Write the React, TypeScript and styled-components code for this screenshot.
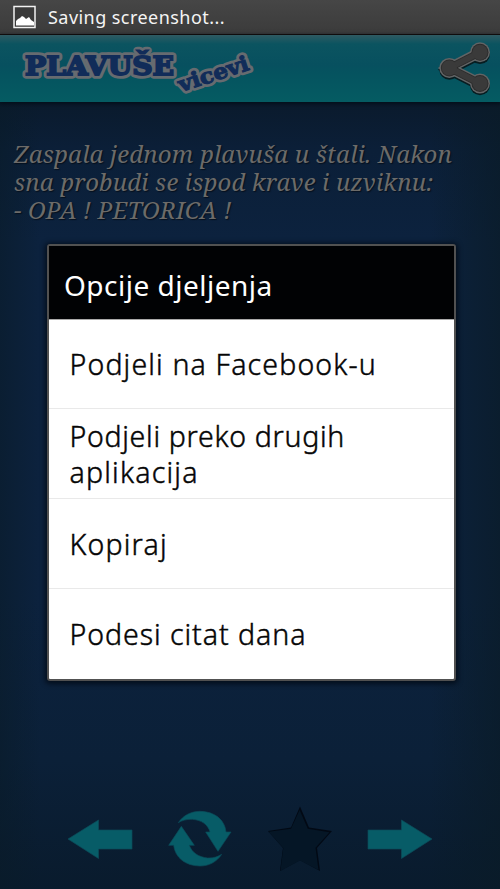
import React from "react";
import styled, { createGlobalStyle } from "styled-components";

const Global = createGlobalStyle`
  * { box-sizing: border-box; }
  body { margin: 0; background: #0a1c33; }
`;

const Screen = styled.div`
  position: relative;
  width: 500px;
  height: 889px;
  overflow: hidden;
  display: flex;
  flex-direction: column;
  background:
    linear-gradient(90deg, rgba(9, 27, 40, 0.55), transparent 8%, transparent 86%, rgba(10, 27, 39, 0.7)),
    linear-gradient(#0a1a2c 100px, #0b1f38 150px, #0c223e 240px, #0c223e 600px, #0b2038 760px, #091b2d 889px);
`;

const StatusBar = styled.div`
  flex: none;
  height: 35px;
  display: flex;
  align-items: center;
  gap: 12px;
  padding: 0 13px 1px;
  background: linear-gradient(#464646, #3b3b3b);
  border-bottom: 1px solid #170e0a;
  color: #f4f4f4;
`;

const StatusText = styled.span`
  font: 18px/24px "Noto Sans", sans-serif;
  white-space: nowrap;
  letter-spacing: 0.45px;
`;

const Header = styled.header`
  flex: none;
  height: 67px;
  display: flex;
  justify-content: space-between;
  background: linear-gradient(#2f5a62, #0b5460 9px, #07505f 30px, #05535f 38px, #055b62 66px);
  box-shadow: 0 1px 4px 1px rgba(2, 8, 18, 0.7);
`;

const Joke = styled.p`
  flex: none;
  margin: 38px 0 0 14px;
  color: #6c6b69;
  font: italic 24px/28px "Noto Serif", "Droid Serif", "DejaVu Serif Condensed", "DejaVu Serif", serif;
  text-shadow: 1px 1px 1px #06101d;
`;

const Line = styled.span<{ $spacing: number }>`
  display: block;
  white-space: nowrap;
  letter-spacing: ${(p) => p.$spacing}px;
`;

const Nav = styled.nav`
  margin-top: auto;
  height: 100px;
  display: flex;
  align-items: center;
  justify-content: space-between;
  padding: 0 50px;
`;

const Dialog = styled.section`
  position: absolute;
  left: 47px;
  top: 244px;
  width: 409px;
  height: 437px;
  border: 2px solid #515151;
  border-radius: 3px;
  background: #fff;
  box-shadow: 0 1px 5px 2px rgba(2, 8, 18, 0.75);
  font-family: "Noto Sans", sans-serif;
`;

const Title = styled.h1`
  margin: 0;
  height: 74px;
  padding: 5px 0 0 15px;
  display: flex;
  align-items: center;
  background: #010204;
  border-bottom: 1px solid #aaa;
  color: #fff;
  font-size: 28px;
  font-weight: 400;
`;

const Options = styled.div`
  margin-top: -1px;
`;

const Option = styled.button`
  width: 100%;
  height: 90px;
  padding: 0 0 0 20.5px;
  display: flex;
  flex-direction: column;
  justify-content: center;
  align-items: flex-start;
  border: 0;
  border-bottom: 1px solid #e9e9e9;
  background: none;
  color: #050505;
  font: 300 28.5px/36px "Noto Sans", sans-serif;
  -webkit-text-stroke: 0.45px #050505;
  &:last-child { border-bottom: 0; }
`;

const Label = styled.span<{ $spacing: number }>`
  display: block;
  white-space: nowrap;
  letter-spacing: ${(p) => p.$spacing}px;
`;

const ImageIcon = () => (
  <svg width="23" height="24" viewBox="0 0 23 24">
    <rect x="1" y="1.5" width="21" height="21" fill="#3a3a3a" stroke="#f2f2f2" strokeWidth="1.5" />
    <path d="M3 20.5V16l2-2 2-1 2-2 2 1 2 2 3-2 2 3 3 2v3.5z" fill="#fff" />
  </svg>
);

const Logo = () => (
  <svg width="270" height="66" viewBox="0 35 270 66">
    <g fontFamily="DejaVu Serif" fontWeight="700" fill="#666b70" stroke="#666b70" strokeLinejoin="round">
      <text x="25" y="75" fontSize="26" strokeWidth="7.5" textLength="149" lengthAdjust="spacingAndGlyphs">PLAVUŠE</text>
      <text fontSize="21" strokeWidth="6.5" transform="translate(181 92) rotate(-18)" textLength="73" lengthAdjust="spacingAndGlyphs">vicevi</text>
    </g>
    <g fontFamily="DejaVu Serif" fontWeight="700" fill="#112c59" stroke="#112c59" strokeWidth="1.9">
      <text x="25" y="75" fontSize="26" textLength="149" lengthAdjust="spacingAndGlyphs">PLAVUŠE</text>
      <text fontSize="21" strokeWidth="1.1" transform="translate(181 92) rotate(-18)" textLength="73" lengthAdjust="spacingAndGlyphs">vicevi</text>
    </g>
  </svg>
);

const shareNodes = [[449.3, 67.9], [480, 52.3], [480, 83.5]];
const ShareLayer = ({ color, r, w, dy = 0 }: { color: string; r: number; w: number; dy?: number }) => (
  <g fill={color} transform={`translate(0 ${dy})`}>
    <path d="M480 52.3 449.3 67.9 480 83.5" fill="none" stroke={color} strokeWidth={w} />
    {shareNodes.map(([x, y]) => <circle key={`${x}-${y}`} cx={x} cy={y} r={r} />)}
  </g>
);

const ShareIcon = () => (
  <svg width="64" height="66" viewBox="436 35 64 66">
    <ShareLayer color="#071c20" r={10} w={10.5} dy={1.8} />
    <ShareLayer color="#626465" r={10} w={10.5} />
    <ShareLayer color="#2c2c2c" r={8.5} w={7.6} />
    <ShareLayer color="#3a3a3a" r={7.6} w={6} />
  </svg>
);

const ArrowIcon = ({ right = false }: { right?: boolean }) => (
  <svg width="100" height="100" viewBox="50 789 100 100">
    <path d="M68 839 98.5 820V830H132V849H98.5V858.5Z" fill="#075c67" stroke="#0b4b59" strokeWidth="0.7" transform={right ? "translate(200 0) scale(-1 1)" : undefined} />
  </svg>
);

const RefreshIcon = () => (
  <svg width="100" height="100" viewBox="0 -3 300 300">
    <g transform="translate(-300 0)" fill="#075c67" stroke="#0b4b59" strokeWidth="2">
      <path d="M385 98C400 76 423 64 450 64 494 64 525 90 528 126H543L504 184 467 126H480C474 104 455 90 427 88 408 87 395 92 385 98Z" transform="translate(300 0) translate(-300 0)" />
      <path d="M515 193C500 216 477 228 450 228 406 228 375 202 371 166H356L394 109 433 166H418C426 188 445 201 473 204 492 205 506 199 515 193Z" />
    </g>
  </svg>
);

const StarIcon = () => (
  <svg width="100" height="100" viewBox="250 789 100 100">
    <path d="M300 806.5 309 827.5 332 831 317 848 320 871 300 860 280 871 283 848 268 831 291 827.5Z" fill="#020914" />
    <path d="M299.6 810 307.8 828.8 329.5 832.2 315.5 847.7 318.5 870 300 860.5 280.4 871 283.3 848 268.5 831.8 291 828.8Z" fill="#051626" />
  </svg>
);

export default function App() {
  return (
    <>
      <Global />
      <Screen>
        <StatusBar>
          <ImageIcon />
          <StatusText>Saving screenshot...</StatusText>
        </StatusBar>
        <Header>
          <Logo />
          <ShareIcon />
        </Header>
        <Joke>
          <Line $spacing={0.17}>Zaspala jednom plavuša u štali. Nakon</Line>
          <Line $spacing={0.15}>sna probudi se ispod krave i uzviknu:</Line>
          <Line $spacing={0.12}>- OPA ! PETORICA !</Line>
        </Joke>
        <Nav>
          <ArrowIcon />
          <RefreshIcon />
          <StarIcon />
          <ArrowIcon right />
        </Nav>
        <Dialog>
          <Title><Label $spacing={0.5}>Opcije djeljenja</Label></Title>
          <Options>
            <Option><Label $spacing={1.15}>Podjeli na Facebook-u</Label></Option>
            <Option><Label $spacing={0.7}>Podjeli preko drugih</Label><Label $spacing={1.2}>aplikacija</Label></Option>
            <Option><Label $spacing={1.2}>Kopiraj</Label></Option>
            <Option><Label $spacing={0.95}>Podesi citat dana</Label></Option>
          </Options>
        </Dialog>
      </Screen>
    </>
  );
}
